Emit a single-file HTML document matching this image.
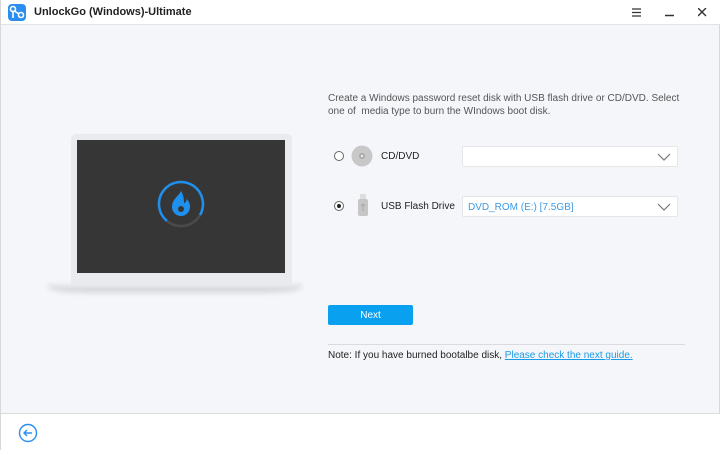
<!DOCTYPE html>
<html><head><meta charset="utf-8"><style>
*{margin:0;padding:0;box-sizing:border-box}
body{width:720px;height:450px;overflow:hidden;font-family:"Liberation Sans",sans-serif;background:#f5f6fa;position:relative;border-left:1px solid #d8d8d8;border-right:1px solid #d8d8d8}
.tb{position:absolute;left:0;top:0;width:720px;height:25px;background:#fff;border-bottom:1px solid #e3e3e3}
.tb .t{position:absolute;left:33px;top:6px;font-size:11px;font-weight:bold;color:#222}
.ft{position:absolute;left:0;top:413px;width:720px;height:37px;background:#fff;border-top:1px solid #dcdcdc}
.a{position:absolute;font-size:10px;color:#555}
.rad{position:absolute;width:10px;height:10px;border:1px solid #666;border-radius:50%;background:#fff}
.sel{position:absolute;left:461px;width:216px;height:21px;background:#fff;border:1px solid #e6e6e6;border-radius:2px;font-size:10px;color:#3a9be8;padding:5px 5px}
.lbl{position:absolute;font-size:10px;color:#222}
</style></head><body>
<div class="tb">
<svg style="position:absolute;left:7px;top:4px" width="18" height="17" viewBox="0 0 18 17"><rect x="0" y="0" width="18" height="17" rx="4" fill="#2a8ef0"/><circle cx="5" cy="5" r="2.5" fill="none" stroke="#fff" stroke-width="1.6"/><circle cx="13" cy="11" r="2.5" fill="none" stroke="#fff" stroke-width="1.6"/><path d="M6.5 7 L11 10 M5 8 V14" stroke="#fff" stroke-width="1.6"/></svg>
<div class="t">UnlockGo (Windows)-Ultimate</div>
<svg style="position:absolute;left:631px;top:8px" width="10" height="9"><path d="M0 1h9M0 4.5h9M0 8h9" stroke="#333" stroke-width="1.3"/></svg>
<svg style="position:absolute;left:664px;top:14px" width="10" height="3"><path d="M0 1.5h9" stroke="#333" stroke-width="1.5"/></svg>
<svg style="position:absolute;left:697px;top:8px" width="9" height="9"><path d="M0 0l8 8M8 0l-8 8" stroke="#333" stroke-width="1.4"/></svg>
</div>

<div style="position:absolute;left:47px;top:282px;width:254px;height:8px;background:linear-gradient(#f2f4f6,#d5d9dd);border-radius:0 0 40px 40px/0 0 6px 6px;box-shadow:0 3px 6px rgba(0,0,0,.12)"></div>
<div style="position:absolute;left:70px;top:134px;width:221px;height:150px;background:#e9ebee;border-radius:5px 5px 0 0"></div>
<div style="position:absolute;left:76px;top:140px;width:208px;height:133px;background:#363636"></div>
<svg style="position:absolute;left:156px;top:180px" width="48" height="48" viewBox="0 0 48 48"><circle cx="24" cy="24" r="22" fill="none" stroke="#4a4a4a" stroke-width="2.5"/><path d="M9.9 40.9 A22 22 0 1 1 43 35" fill="none" stroke="#1e90ee" stroke-width="2.5"/><path d="M24 11 c-2 5 -9 8 -9 16 a9 9 0 0 0 18 0 c0-4-1.5-6-3.5-8 c0 2.5-1 4-2.5 4 c0-5-1-9-3-12z" fill="#1e90ee"/><circle cx="24" cy="29" r="3" fill="#363636"/></svg>

<div class="a" style="left:327px;top:92px;width:360px;line-height:13px">Create a Windows password reset disk with USB flash drive or CD/DVD. Select one of &nbsp;media type to burn the WIndows boot disk.</div>

<div class="rad" style="left:333px;top:151px"></div>
<svg style="position:absolute;left:350px;top:145px" width="22" height="22"><circle cx="11" cy="11" r="10.5" fill="#c8c8c8"/><circle cx="11" cy="11" r="3" fill="#a9a9a9"/><circle cx="11" cy="11" r="1.2" fill="#eee"/></svg>
<div class="lbl" style="left:380px;top:151px">CD/DVD</div>
<div class="sel" style="top:146px"></div>
<svg style="position:absolute;left:656px;top:153px" width="14" height="8"><path d="M1 1l6 6 6-6" fill="none" stroke="#777" stroke-width="1.2"/></svg>

<div class="rad" style="left:333px;top:201px"></div>
<div style="position:absolute;left:336px;top:204px;width:4px;height:4px;border-radius:50%;background:#222"></div>
<svg style="position:absolute;left:356px;top:194px" width="12" height="24"><rect x="3" y="0" width="6" height="6" fill="#ddd"/><rect x="1" y="5" width="10" height="17" rx="2" fill="#c6c6c6"/><path d="M6 10v7M4 12l2-2 2 2" stroke="#aaa" fill="none"/></svg>
<div class="lbl" style="left:380px;top:201px">USB Flash Drive</div>
<div class="sel" style="top:196px">DVD_ROM (E:) [7.5GB]</div>
<svg style="position:absolute;left:656px;top:203px" width="14" height="8"><path d="M1 1l6 6 6-6" fill="none" stroke="#777" stroke-width="1.2"/></svg>

<div style="position:absolute;left:327px;top:305px;width:85px;height:20px;background:#0aa0f0;border-radius:2px;color:#fff;font-size:10px;text-align:center;line-height:21px">Next</div>
<div style="position:absolute;left:327px;top:344px;width:357px;height:1px;background:#d9dbde"></div>
<div class="a" style="left:327px;top:350px;color:#222">Note: If you have burned bootalbe disk, <span style="color:#1a9be8;text-decoration:underline">Please check the next guide.</span></div>

<div class="ft"><svg style="position:absolute;left:17px;top:9px" width="20" height="20"><circle cx="10" cy="10" r="8.5" fill="none" stroke="#2a8ef0" stroke-width="1.4"/><path d="M14 10H6M9 7l-3 3 3 3" fill="none" stroke="#2a8ef0" stroke-width="1.4"/></svg></div>
</body></html>
